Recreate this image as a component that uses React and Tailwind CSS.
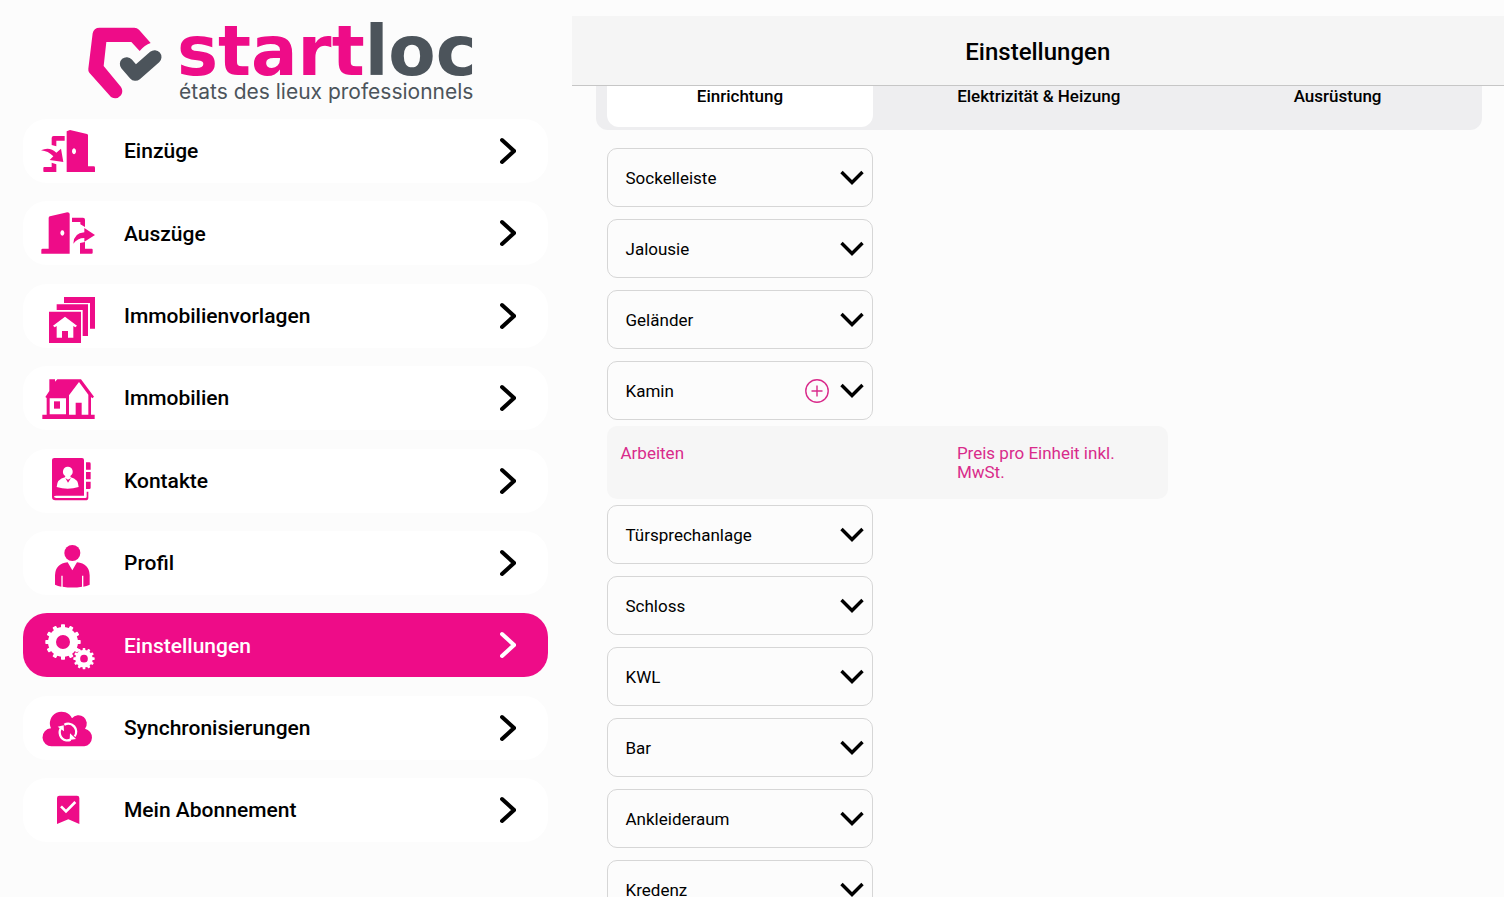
import { useState } from "react";

const EnterIcon = () => (
  <svg className="w-[100px] h-16 shrink-0" viewBox="9 12 300 192" fill="currentColor">
    <path d="M140 49l10-4 51 12q3 1 3 4v93h17q4 0 4 4v13h-85zM162 100a6 9 0 1 0 .1 0z" fillRule="evenodd" />
    <path d="M134 63v14h-25v17l-14-4V69q0-6 6-6zM95 143l14 5v23H72q-2 0-2-4v-8q0-3 3-3h22z" />
    <path d="M63 106q26-12 46 7l14-12 7 40-41-6 11-11q-15-16-37-18z" />
  </svg>
);

const ExitIcon = () => (
  <svg className="w-[100px] h-16 shrink-0" viewBox="9 259 300 192" fill="currentColor">
    <path d="M86 310q0-4 4-5l52-12q7 0 7 5v119H64v-11q0-4 4-4h18zM127 347a6 8 0 1 0 .1 0z" fillRule="evenodd" />
    <path d="M156 309h33q6 0 6 6v22l-14-8v-7h-25zM180 385l15-3v20h20q3 0 3 3v9q0 3-3 3h-35z" />
    <path d="M160 387q1-32 33-34v-13l32 21-32 20v-11q-21 0-33 17z" />
  </svg>
);

const TemplatesIcon = () => (
  <svg className="w-[100px] h-16 shrink-0" viewBox="9 11 300 192" fill="currentColor">
    <path d="M132 50h93v95h-15V68h-78zM110 72h94v95h-16V89h-78z" />
    <path d="M87 94h96v94H87zM135 109l-36 27 5 5 6-4v35h16v-20h18v20h16v-35l6 4 5-5z" fillRule="evenodd" />
  </svg>
);

const HouseIcon = () => (
  <svg className="w-[100px] h-16 shrink-0" viewBox="9 259 300 192" fill="currentColor">
    <path
      fillRule="evenodd"
      d="M88 299h17v7l7-7h71l39 52-5 5-4-4v53h11v13H67v-13h13v-50l-4-3 12-18zM177 307l-30 40v58h20v-36h18v36h20v-60zM89 356v48h49v-48z"
    />
    <path d="M102 365h18v22h-18z" />
  </svg>
);

const ContactsIcon = () => (
  <svg className="w-[100px] h-16 shrink-0" viewBox="9 11 300 192" fill="currentColor">
    <path
      fillRule="evenodd"
      d="M103 38h83q6 0 6 6v107h-83q-7 0-7 3t7 4h87q4 0 4-4v-15h5v18q0 8-9 8h-90q-10 0-10-10V44q0-6 7-6zM144 64a14 15 0 0 0-8 28l-1 4q-24 5-25 29 33 10 66 0-1-24-24-29l-1-4a14 15 0 0 0-7-28z"
    />
    <path d="M136 98l8 14 9-14-9 5z" />
    <path d="M198 51h10q4 0 4 4v18h-14zM198 80h14v22h-14zM198 109h14v18q0 4-4 4h-10z" />
  </svg>
);

const ProfileIcon = () => (
  <svg className="w-[100px] h-16 shrink-0" viewBox="9 258 300 192" fill="currentColor">
    <circle cx="157" cy="324" r="24" />
    <path d="M143 352l14 24 14-24q37 4 38 39v28q-9 5-19 6v-33h-4v33q-29 5-58 0v-33h-4v33q-10-1-19-6v-28q1-35 38-39z" />
  </svg>
);

const teeth = (cx, cy, r, w, h) =>
  Array.from({ length: 12 }, (_, i) => (
    <rect key={i} x={cx - w / 2} y={cy - r} width={w} height={h} rx="2" transform={`rotate(${i * 30} ${cx} ${cy})`} />
  ));

const SettingsIcon = () => (
  <svg className="w-[100px] h-16 shrink-0" viewBox="9 25 300 192" fill="currentColor">
    {teeth(129, 112, 53, 12, 16)}
    <circle cx="129" cy="112" r="33" fill="none" stroke="currentColor" strokeWidth="24" />
    {teeth(192, 162, 32, 8, 12)}
    <circle cx="192" cy="162" r="19" fill="none" stroke="currentColor" strokeWidth="15" />
  </svg>
);

const SyncIcon = () => (
  <svg className="w-[100px] h-16 shrink-0" viewBox="9 272 300 192" fill="currentColor">
    <path d="M96 423a27 27 0 0 1-3-54 33 33 0 0 1 63-30 24 24 0 0 1 39 31 27 27 0 0 1-2 53z" />
    <g fill="none" stroke="white" strokeWidth="7">
      <path d="M138 405a24 24 0 0 1-14-38" />
      <path d="M133 358a24 24 0 0 1 31 35" />
      <path d="M152 403a24 24 0 0 1-14 2" />
    </g>
    <path d="M113 364l18-4 1 18zM150 384l18 17-19 3z" fill="white" />
  </svg>
);

const SubscriptionIcon = () => (
  <svg className="w-[100px] h-16 shrink-0" viewBox="9 25 300 192" fill="currentColor">
    <path d="M118 78h53q7 0 7 7v78l-33-14-34 14V85q0-7 7-7z" />
    <path d="M123 110l15 15 28-28" fill="none" stroke="white" strokeWidth="8" />
  </svg>
);

const menu = [
  { label: "Einzüge", Icon: EnterIcon },
  { label: "Auszüge", Icon: ExitIcon },
  { label: "Immobilienvorlagen", Icon: TemplatesIcon },
  { label: "Immobilien", Icon: HouseIcon },
  { label: "Kontakte", Icon: ContactsIcon },
  { label: "Profil", Icon: ProfileIcon },
  { label: "Einstellungen", Icon: SettingsIcon },
  { label: "Synchronisierungen", Icon: SyncIcon },
  { label: "Mein Abonnement", Icon: SubscriptionIcon },
];

const tabs = ["Einrichtung", "Elektrizität & Heizung", "Ausrüstung"];

const items = [
  "Sockelleiste",
  "Jalousie",
  "Geländer",
  "Kamin",
  "Türsprechanlage",
  "Schloss",
  "KWL",
  "Bar",
  "Ankleideraum",
  "Kredenz",
];

const Logo = () => (
  <svg className="w-[412px] h-[100px] mx-auto shrink-0 overflow-visible" viewBox="0 0 412 100" role="img" aria-label="startloc">
    <g transform="scale(.33333)">
      <path
        d="M62 38H166Q174 38 180 44L215 84Q197 90 182 108L157 81H82L74 153L126 216Q134 229 126 241Q113 256 96 246L31 173Q27 168 28 161L41 55Q44 38 62 38Z"
        fill="#ee0c88"
      />
      <path d="M143 147L169 177L227 126" fill="none" stroke="#4c545b" strokeWidth="41" strokeLinecap="round" strokeLinejoin="round" />
    </g>
    <text x="98" y="60" className="font-['DejaVu_Sans'] font-bold text-[69px]" fill="#ee0c88">
      start<tspan fill="#4c545b">loc</tspan>
    </text>
    <text x="100" y="84" className="font-['Inter'] text-[21px]" fill="#4c545b">
      états des lieux professionnels
    </text>
  </svg>
);

const Sidebar = () => {
  const [active, setActive] = useState("Einstellungen");

  return (
    <aside className="w-[38%] shrink-0 flex flex-col pt-[15px] pb-[55px] pl-[23px] pr-6">
      <Logo />
      <nav className="flex-1 flex flex-col justify-between mt-1">
        {menu.map(({ label, Icon }) => (
          <button
            key={label}
            type="button"
            onClick={() => setActive(label)}
            className={`flex items-center h-16 pr-8 rounded-3xl text-[21px] font-medium ${
              active === label ? "bg-[#ee0c88] text-white" : "bg-white text-black"
            }`}
          >
            <span className={active === label ? "text-white" : "text-[#ee0c88]"}>
              <Icon />
            </span>
            <span className="flex-1 pl-px pt-0.5 text-left">{label}</span>
            <svg className="w-4 h-7" viewBox="0 0 16 28" fill="none" stroke="currentColor" strokeWidth="4" strokeLinecap="round">
              <path d="M2 3l12 11L2 25" />
            </svg>
          </button>
        ))}
      </nav>
    </aside>
  );
};

const Item = ({ label, open, onToggle }) => (
  <li>
    <div className="grid grid-cols-3 gap-8">
      <div className="flex items-center h-[59px] pl-[18px] pr-2 border border-[#d6d6d6] rounded-[10px]">
        <span className="flex-1 pt-0.5 text-[17px]">{label}</span>
        {open && (
          <button type="button" aria-label="Hinzufügen" className="mr-[11px]">
            <svg className="w-6 h-6" viewBox="0 0 24 24" fill="none" stroke="#d92b8b" strokeWidth="1.4">
              <circle cx="12" cy="12" r="11.2" />
              <path d="M12 6.5v11M6.5 12h11" />
            </svg>
          </button>
        )}
        <button type="button" aria-label={label} aria-expanded={open} onClick={onToggle}>
          <svg className="w-6 h-6" viewBox="0 0 24 24" fill="none" stroke="black" strokeWidth="3.4">
            <path d="M1.5 6L12 16.5 22.5 6" />
          </svg>
        </button>
      </div>
    </div>
    {open && (
      <div className="flex w-[65%] h-[73px] mt-1.5 -mb-1.5 pt-[18px] px-[14px] rounded-[10px] bg-[#f6f6f6] text-[17px] leading-[19px] text-[#d92b8b]">
        <span className="w-[63%]">Arbeiten</span>
        <span className="w-[170px]">Preis pro Einheit inkl. MwSt.</span>
      </div>
    )}
  </li>
);

const Settings = () => {
  const [tab, setTab] = useState(tabs[0]);
  const [open, setOpen] = useState("Kamin");

  return (
    <main className="flex-1 min-w-0 flex flex-col pt-4">
      <header className="flex items-center justify-center h-[70px] shrink-0 pt-0.5 bg-[#f5f5f5] border-b border-[#c6c6c6]">
        <h1 className="text-2xl font-medium">Einstellungen</h1>
      </header>
      <div className="flex-1 overflow-hidden pl-6 pr-[22px]">
        {/* Tabs, partly scrolled under the header */}
        <div className="grid grid-cols-3 gap-8 -mt-[22px] px-[11px] py-[3px] rounded-xl bg-[#eeeef0]">
          {tabs.map((name) => (
            <button
              key={name}
              type="button"
              onClick={() => setTab(name)}
              className={`h-[60px] rounded-xl text-[17px] font-medium ${tab === name ? "bg-white" : ""}`}
            >
              {name}
            </button>
          ))}
        </div>
        <ul className="flex flex-col gap-3 mt-[18px] px-[11px]">
          {items.map((label) => (
            <Item
              key={label}
              label={label}
              open={open === label}
              onToggle={() => setOpen(open === label ? "" : label)}
            />
          ))}
        </ul>
      </div>
    </main>
  );
};

const App = () => (
  <div className="flex h-screen overflow-hidden bg-[#fcfcfc] text-black font-['Roboto',sans-serif]">
    <Sidebar />
    <Settings />
  </div>
);

export default App;
